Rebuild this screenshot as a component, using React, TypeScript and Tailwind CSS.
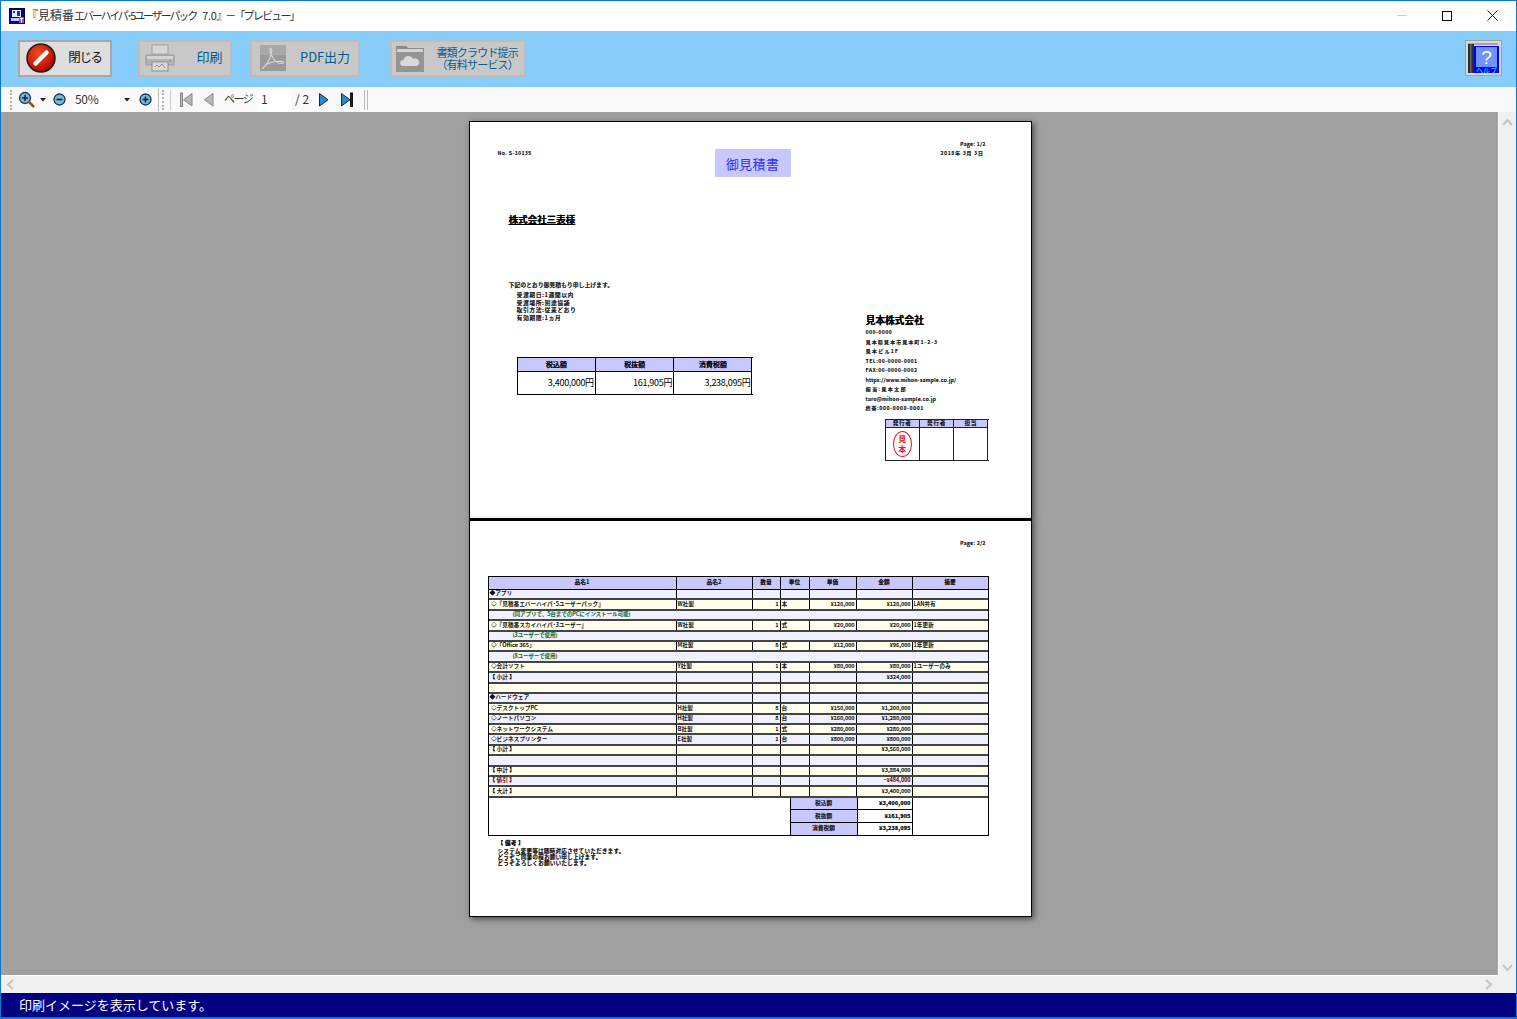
import React from "react";

const font = { fontFamily: '"Noto Sans CJK JP", "Noto Sans", sans-serif' };

function AppIcon() {
  return (
    <svg width="16" height="16" viewBox="0 0 16 16" className="shrink-0">
      <rect x="0.5" y="0.5" width="15" height="15" fill="#0000a8" stroke="#000050" />
      <rect x="2.500" y="1.500" width="10" height="8" fill="#e8e8ff" stroke="#000" />
      <rect x="4" y="3" width="2" height="2" fill="#2030c0" />
      <rect x="8" y="3" width="3" height="5" fill="#2030c0" />
      <rect x="2" y="10" width="9" height="3" fill="#c8c8e8" />
      <rect x="10" y="9" width="5" height="6" fill="#b040c0" />
      <path d="M11 10.500h3M12.500 10.500v4" stroke="#fff" />
    </svg>
  );
}

function CloseIcon() {
  return (
    <svg width="30" height="30" viewBox="0 0 30 30">
      <defs>
        <radialGradient id="rd" cx="40%" cy="35%" r="70%">
          <stop offset="0" stopColor="#f04a20" />
          <stop offset="0.7" stopColor="#cc1808" />
          <stop offset="1" stopColor="#7a0800" />
        </radialGradient>
      </defs>
      <circle cx="15" cy="15" r="14" fill="url(#rd)" stroke="#2a1a10" strokeWidth="1.5" />
      <path d="M9.5 20.5 20.5 9.5" stroke="#fff" strokeWidth="4.5" strokeLinecap="round" />
    </svg>
  );
}

function PrinterIcon() {
  return (
    <svg width="30" height="28" viewBox="0 0 30 28">
      <rect x="7" y="1" width="16" height="9" fill="#d8d8d8" stroke="#a0a0a0" />
      <path d="M1 11h28v10H1z" fill="#b4b4b4" stroke="#989898" />
      <rect x="2" y="12" width="26" height="3" fill="#d4d4d4" />
      <circle cx="25" cy="17" r="1" fill="#8a8a8a" />
      <rect x="7" y="18" width="16" height="9" fill="#d8d8d8" stroke="#8f8f8f" />
      <path d="M10 23l2-2 2 2 3-3 3 4" fill="none" stroke="#8f8f8f" />
    </svg>
  );
}

function PdfIcon() {
  return (
    <svg width="26" height="26" viewBox="0 0 26 26">
      <rect width="26" height="26" fill="#9a9a9a" />
      <rect width="26" height="10" fill="#a8a8a8" />
      <path d="M2 24c5-4 8-10 9.500-16 .4-2 .3-5-.7-5-1 0-1 3-.3 5 2 5 5 9 8 10 2 .5 5 .5 5-.5s-4-1.500-8-1c-4 .5-9 2.500-11 5"
        fill="none" stroke="#d4d4d4" strokeWidth="1.200" />
    </svg>
  );
}

function FolderIcon() {
  return (
    <svg width="28" height="28" viewBox="0 0 28 28">
      <path d="M0 2h10l2 2h16v24H0z" fill="#8a8a8a" />
      <rect x="1" y="5" width="26" height="3" fill="#d4d4d4" />
      <rect x="0" y="8" width="28" height="20" fill="#949494" />
      <path d="M7 22a3 3 0 0 1 .5-6 5 5 0 0 1 9.500-1 3.500 3.500 0 0 1 4 7z" fill="#d8d8d8" />
    </svg>
  );
}

function HelpIcon() {
  return (
    <svg width="37" height="36" viewBox="0 0 37 36">
      <rect x="0.500" y="0.500" width="36" height="35" fill="#d8d8d8" stroke="#a0a0a0" />
      <rect x="3" y="3" width="30" height="2" fill="#a8a8a8" />
      <rect x="3" y="4" width="6" height="29" fill="#303030" />
      <rect x="5" y="4" width="1.500" height="29" fill="#666" />
      <rect x="9" y="6" width="25" height="27" fill="#0000f0" />
      <rect x="11" y="7" width="21" height="20" fill="#7094ff" />
      <text x="21.500" y="23.500" textAnchor="middle" fontSize="19" fill="#fff" fontFamily="Liberation Sans">?</text>
      <text x="21.500" y="32.500" textAnchor="middle" fontSize="7" fill="#20f0ff" fontFamily="Noto Sans CJK JP">ヘルプ</text>
    </svg>
  );
}

function ToolButton({ icon, children, w, iconW, disabled }: { icon: React.ReactNode; children: React.ReactNode; w: string; iconW: string; disabled?: boolean }) {
  return (
    <div className={`${w} h-[37px] flex items-center border-2 whitespace-nowrap ${disabled ? "bg-[#c8c8c8] border-[#bcbcbc] text-[#005c8e]" : "bg-[#dedede] border-[#a8a8a8] text-[#111]"}`}>
      <div className={`${iconW} flex justify-center items-center shrink-0`}>{icon}</div>
      <div className="flex-1 text-center">{children}</div>
    </div>
  );
}

function Grip() {
  return <div className="h-[20px] w-[3px] border-l-2 border-dotted border-[#b4b4b4]" />;
}

function NavIcon({ kind }: { kind: "first" | "prev" | "next" | "last" }) {
  const dis = kind === "first" || kind === "prev";
  const fill = dis ? "#b8b8b8" : "#2f86c8";
  const stroke = dis ? "#888" : "#0c2c50";
  const path = kind === "first" || kind === "prev" ? "M12 1.500V14L3.500 7.800z" : "M3.500 1.500V14L12 7.800z";
  return (
    <svg width="15" height="16" viewBox="0 0 15 16">
      <path d={path} fill={fill} stroke={stroke} />
      {kind === "first" && <rect x="0.500" y="1" width="2" height="13.500" fill="#b8b8b8" stroke="#888" />}
      {kind === "last" && <rect x="12.500" y="1" width="2" height="13.500" fill="#222" stroke="#111" />}
    </svg>
  );
}

function RoundIcon({ plus }: { plus?: boolean }) {
  return (
    <svg width="13" height="13" viewBox="0 0 13 13">
      <circle cx="6.500" cy="6.500" r="5.500" fill="#7db6dc" stroke="#17394f" strokeWidth="1.300" />
      <path d={plus ? "M3.500 6.500h6M6.500 3.500v6" : "M3.500 6.500h6"} stroke="#0c2434" strokeWidth="1.600" />
    </svg>
  );
}

function Caret() {
  return (
    <svg width="6" height="4" viewBox="0 0 6 4">
      <path d="M0 0h6L3 3.500z" fill="#222" />
    </svg>
  );
}

const W = [188, 76, 28, 29, 47, 56, 75];

type Row = { c?: string[]; note?: string; color?: string };
const rows: Row[] = [
  { c: ["◆アプリ"] },
  { c: [" ◇『見積番エバーハイパ･5ユーザーパック』", "W社製", "1", "本", "¥120,000", "¥120,000", "LAN共有"] },
  { note: "(同アプリで、5台までのPCにインストール可能)" },
  { c: [" ◇『見積番スカイハイパ･3ユーザー』", "W社製", "1", "式", "¥20,000", "¥20,000", "1年更新"] },
  { note: "(3ユーザーで使用)" },
  { c: [" ◇「Office 365」", "M社製", "8", "式", "¥12,000", "¥96,000", "1年更新"] },
  { note: "(8ユーザーで使用)" },
  { c: [" ◇会計ソフト", "Y社製", "1", "本", "¥80,000", "¥80,000", "1ユーザーのみ"] },
  { c: ["【 小計 】", "", "", "", "", "¥324,000"] },
  { c: [""] },
  { c: ["◆ハードウェア"] },
  { c: [" ◇デスクトップPC", "H社製", "8", "台", "¥150,000", "¥1,200,000"] },
  { c: [" ◇ノートパソコン", "H社製", "8", "台", "¥160,000", "¥1,280,000"] },
  { c: [" ◇ネットワークシステム", "B社製", "1", "式", "¥280,000", "¥280,000"] },
  { c: [" ◇ビジネスプリンター", "E社製", "1", "台", "¥800,000", "¥800,000"] },
  { c: ["【 小計 】", "", "", "", "", "¥3,560,000"] },
  { c: [""] },
  { c: ["【 中計 】", "", "", "", "", "¥3,884,000"] },
  { c: ["【 値引 】", "", "", "", "", "−¥484,000"], color: "#7a0000" },
  { c: ["【 大計 】", "", "", "", "", "¥3,400,000"] },
];

const smear = "[text-shadow:0.3px_0_0_currentColor]";

function DataRow({ r, i }: { r: Row; i: number }) {
  const bg = i % 2 === 0 ? "bg-[#f0f0ff]" : "bg-[#ffffec]";
  if (r.note) {
    return (
      <div className={`h-[10.4px] ${bg} border-b-2 border-[#444] flex items-center pl-[24px] text-[5.500px] text-[#0a6a20] leading-none whitespace-nowrap`}>
        {r.note}
      </div>
    );
  }
  const cells = r.c || [];
  return (
    <div className={`h-[10.4px] ${bg} border-b-2 border-[#444] flex text-[5.500px] tracking-[0.15px] leading-none whitespace-nowrap`} style={{ color: r.color || "#111" }}>
      {W.map((w, k) => (
        <div
          key={k}
          style={{ width: w }}
          className={`h-full flex items-center overflow-hidden px-[1px] ${k < 6 ? "border-r border-black" : ""} ${k === 2 || k === 4 || k === 5 ? "justify-end" : ""}`}
        >
          <span className="whitespace-pre">{cells[k] || ""}</span>
        </div>
      ))}
    </div>
  );
}

const companyLines = [
  { t: "000-0000", k: "tracking-[0.6px]" },
  { t: "見本県見本市見本町1-2-3", k: "tracking-[1.1px]" },
  { t: "見本ビル1F", k: "tracking-[1.300px]" },
  { t: "TEL:00-0000-0001", k: "tracking-[0.6px]" },
  { t: "FAX:00-0000-0002", k: "tracking-[0.6px]" },
  { t: "https://www.mihon-sample.co.jp/", k: "tracking-[0.3px]" },
  { t: "担当:見本太郎", k: "tracking-[1.400px]" },
  { t: "taro@mihon-sample.co.jp", k: "tracking-[0.35px]" },
  { t: "携帯:000-0000-0001", k: "tracking-[0.75px]" },
];

const Sum = [
  ["税込額", "3,400,000円"],
  ["税抜額", "161,905円"],
  ["消費税額", "3,238,095円"],
];

export default function App() {
  return (
    <div style={font} className="w-[1517px] h-[1019px] flex flex-col border-x border-b-2 border-[#0f78c8] border-t bg-white overflow-hidden">
      {/* title bar */}
      <div className="h-[30px] flex items-center bg-white shrink-0 pb-[1px]">
        <div className="ml-[8px]"><AppIcon /></div>
        <div className="ml-[1px] pb-[1px] text-[12px] text-[#333] whitespace-nowrap flex items-baseline">
          <span>『見積番</span>
          <span className="text-[11px] tracking-[-2.100px]">エバーハイパ･5ユーザーパック</span>
          <span className="text-[11px] ml-[6px] tracking-[-0.3px]">7.0』</span>
          <span className="text-[11px] tracking-[-1.800px] ml-[-2px]">－「プレビュー」</span>
        </div>
        <div className="ml-auto flex items-center">
          <div className="w-[10px] h-[1px] bg-[#ccc] mr-[35px]" />
          <div className="w-[10px] h-[10px] border border-black mr-[35px]" />
          <svg width="11" height="11" viewBox="0 0 11 11" className="mr-[18px]"><path d="M0.500 0.500l10 10M10.500 0.500l-10 10" stroke="#111" strokeWidth="1" /></svg>
        </div>
      </div>

      {/* main toolbar */}
      <div className="h-[56px] bg-[#87cdfb] shrink-0 flex items-center pl-[17px] pr-[14px] pb-[2px]">
        <ToolButton w="w-[94px]" iconW="w-[42px]" icon={<CloseIcon />}>
          <div className="pr-[2px] pb-[2px] text-[12.500px] tracking-[-1.400px]">閉じる</div>
        </ToolButton>
        <div className="ml-[26px]">
          <ToolButton disabled w="w-[94px]" iconW="w-[40px]" icon={<PrinterIcon />}>
            <div className="pl-[9px] pb-[2px] text-[13px] tracking-[0px]">印刷</div>
          </ToolButton>
        </div>
        <div className="ml-[18px]">
          <ToolButton disabled w="w-[110px]" iconW="w-[42px]" icon={<PdfIcon />}>
            <div className="pr-[2px] pb-[2px] text-[13px] tracking-[-0.1px]">PDF出力</div>
          </ToolButton>
        </div>
        <div className="ml-[30px]">
          <ToolButton disabled w="w-[136px]" iconW="w-[36px]" icon={<FolderIcon />}>
            <div className="pr-[6px] text-right text-[11px] leading-[12px] tracking-[-0.8px]">
              <div>書類クラウド提示</div>
              <div>（有料サービス）</div>
            </div>
          </ToolButton>
        </div>
        <div className="ml-auto"><HelpIcon /></div>
      </div>

      {/* nav toolbar */}
      <div className="h-[25px] bg-[#f9f9f9] shrink-0 flex items-center text-[12px] text-[#333]">
        <div className="ml-[9px]"><Grip /></div>
        <svg width="17" height="17" viewBox="0 0 17 17" className="ml-[5px]">
          <circle cx="7" cy="7" r="5.500" fill="#7db6dc" stroke="#17394f" strokeWidth="1.300" />
          <path d="M4 7h6M7 4v6" stroke="#0c2434" strokeWidth="1.500" />
          <path d="M11 11l5 5" stroke="#8a5a20" strokeWidth="2.500" />
        </svg>
        <div className="ml-[5px]"><Caret /></div>
        <div className="ml-[7px]"><RoundIcon /></div>
        <div className="ml-[6px] w-[48px] h-[24px] bg-white flex items-center pl-[3px] pb-[2px] tracking-[-0.3px]">50%</div>
        <div className="ml-[4px]"><Caret /></div>
        <div className="ml-[9px]"><RoundIcon plus /></div>
        <div className="ml-[6px] w-[1px] h-[22px] bg-[#bbb]" />
        <div className="ml-[3px]"><Grip /></div>
        <div className="ml-[5px] w-[1px] h-[20px] bg-[#ccc]" />
        <div className="ml-[9px]"><NavIcon kind="first" /></div>
        <div className="ml-[6px]"><NavIcon kind="prev" /></div>
        <div className="ml-[8px] w-[28px] pb-[2px] text-[11px] tracking-[-1.500px] whitespace-nowrap">ページ</div>
        <div className="ml-[5px] w-[34px] h-[24px] bg-white flex items-center pl-[4px] pb-[2px]">1</div>
        <div className="ml-[4px] w-[15px] pb-[2px] whitespace-nowrap">/ 2</div>
        <div className="ml-[6px]"><NavIcon kind="next" /></div>
        <div className="ml-[7px]"><NavIcon kind="last" /></div>
        <div className="ml-[11px] w-[1px] h-[20px] bg-[#bbb]" />
        <div className="ml-[2px] w-[1px] h-[20px] bg-[#bbb]" />
      </div>

      {/* preview + vertical scrollbar */}
      <div className="flex h-[864px] shrink-0">
        <div className="w-[1498px] bg-[#a0a0a0] border-r border-b border-white flex flex-col items-center pt-[9px] pl-[1px] overflow-hidden">
          {/* page 1 */}
          <div className={`w-[563px] h-[398px] pl-[1px] shrink-0 bg-white border border-black shadow-[2px_2px_6px_rgba(0,0,0,0.55)] text-[#222] ${smear}`}>
            <div className="flex pl-[27px] pr-[45px] pt-[17px] text-[5px] leading-[9px] font-medium">
              <div className="w-[217px] mt-[9px] tracking-[0.5px]">No. S-10135</div>
              <div className="mt-[10px] w-[76px] h-[28px] bg-[#c8c8ff] text-[#3030f0] text-[13px] tracking-[0.4px] flex items-center justify-center font-normal [text-shadow:none]">御見積書</div>
              <div className="ml-auto text-right">
                <div className="tracking-[0.4px]">Page: 1/2</div>
                <div className="mr-[2px] tracking-[0.8px]">2018年 3月 3日</div>
              </div>
            </div>
            <div className="ml-[38px] mt-[35px] text-[9.500px] leading-[14px] font-bold text-black underline">株式会社三表様</div>
            <div className="flex mt-[55px]">
              <div className="w-[395px] shrink-0">
                <div className="ml-[38px] text-[5.700px] tracking-[0.15px] leading-[8px] font-medium">下記のとおり御見積もり申し上げます。</div>
                <div className="ml-[46px] mt-[2px] text-[5.700px] tracking-[0.7px] leading-[7.500px] font-medium">
                  <div>受渡期日:1週間以内</div>
                  <div>受渡場所:別途協議</div>
                  <div>取引方法:従来どおり</div>
                  <div>有効期限:1ヵ月</div>
                </div>
                <div className="ml-[46px] mt-[36px] w-[236px] flex border border-black border-r-0">
                  {Sum.map(([h, v]) => (
                    <div key={h} className="flex-1 border-r border-black">
                      <div className="h-[14px] bg-[#c8c8ff] border-b border-black flex items-center justify-center text-[7px] font-medium text-black">{h}</div>
                      <div className="h-[22px] flex items-center justify-end text-[9px] tracking-[-0.3px] pr-[1px] text-black [text-shadow:none]">{v}</div>
                    </div>
                  ))}
                </div>
              </div>
              <div className="mt-[32px]">
                <div className="text-[9.700px] leading-[14px] font-bold text-black">見本株式会社</div>
                <div className="text-[5px] leading-[9.500px] font-medium whitespace-nowrap">
                  {companyLines.map((l) => <div key={l.t} className={l.k}>{l.t}</div>)}
                </div>
                <div className="ml-[19px] mt-[6px] w-[104px] flex border border-[#222] border-r-0">
                  {["発行者", "発行者", "担当"].map((h, i) => (
                    <div key={i} className="flex-1 border-r border-[#222]">
                      <div className="h-[8px] bg-[#c8c8ff] border-b border-[#222] flex items-center justify-center text-[5.500px] tracking-[0.8px] font-medium">{h}</div>
                      <div className="h-[32px] flex items-center justify-center">
                        {i === 0 && (
                          <div className="w-[19px] h-[26px] rounded-[50%] border border-[#f01020] flex flex-col items-center justify-center text-[#f01020] text-[8px] leading-[10px] font-bold [text-shadow:none]">
                            <span>見</span><span>本</span>
                          </div>
                        )}
                      </div>
                    </div>
                  ))}
                </div>
              </div>
            </div>
          </div>

          {/* page 2 */}
          <div className={`w-[563px] h-[398px] pl-[1px] shrink-0 bg-white border border-black border-t-2 shadow-[2px_2px_6px_rgba(0,0,0,0.55)] text-[#222] ${smear}`}>
            <div className="pr-[45px] pt-[17px] text-right text-[5px] tracking-[0.4px] leading-[9px] font-medium">Page: 2/2</div>
            <div className="ml-[17px] mt-[29px] w-[501px] border border-black">
              <div className="h-[13px] flex bg-[#c8c8ff] border-b border-black text-[5.500px] tracking-[0.3px] leading-none font-medium text-[#111]">
                {["品名1", "品名2", "数量", "単位", "単価", "金額", "摘要"].map((h, k) => (
                  <div key={h} style={{ width: W[k] }} className={`h-full flex items-center justify-center ${k < 6 ? "border-r border-black" : ""}`}>{h}</div>
                ))}
              </div>
              {rows.map((r, i) => <DataRow key={i} r={r} i={i} />)}
              <div className="h-[37px] flex justify-end">
                <div className="w-[123px] flex flex-col border-l border-r border-black text-[5.500px] tracking-[0.2px] leading-none">
                  {["税込額", "税抜額", "消費税額"].map((l, i) => (
                    <div key={l} className={`flex-1 flex ${i < 2 ? "border-b border-black" : ""}`}>
                      <div className="w-[67px] bg-[#c8c8ff] border-r border-black flex items-center justify-center font-medium">{l}</div>
                      <div className="flex-1 flex items-center justify-end pr-[1px] font-bold">{["¥3,400,000", "¥161,905", "¥3,238,095"][i]}</div>
                    </div>
                  ))}
                </div>
                <div className="w-[75px]" />
              </div>
            </div>
            <div className="ml-[27px] mt-[3px] text-[5.500px] tracking-[0.3px] leading-[6px] font-medium text-[#111] whitespace-nowrap">
              <div className="leading-[9px] font-bold">【 備考 】</div>
              <div>システム変更等は随時対応させていただきます。</div>
              <div>どうぞご同業の程お願い申し上げます。</div>
              <div>どうぞよろしくお願いいたします。</div>
            </div>
          </div>
        </div>
        <div className="flex-1 bg-[#f0f0f0] flex flex-col items-center justify-between pt-[6px] pb-[4px]">
          <svg width="11" height="8" viewBox="0 0 11 8"><path d="M1 7l4.500-5L10 7" fill="none" stroke="#c4c4c4" strokeWidth="2" /></svg>
          <svg width="11" height="8" viewBox="0 0 11 8"><path d="M1 1l4.500 5L10 1" fill="none" stroke="#c4c4c4" strokeWidth="2" /></svg>
        </div>
      </div>

      {/* horizontal scrollbar */}
      <div className="h-[17px] shrink-0 bg-[#f0f0f0] flex items-center pl-[5px] pr-[23px] justify-between">
        <svg width="8" height="11" viewBox="0 0 8 11"><path d="M7 1L2 5.500 7 10" fill="none" stroke="#c4c4c4" strokeWidth="2" /></svg>
        <svg width="8" height="11" viewBox="0 0 8 11"><path d="M1 1l5 4.500L1 10" fill="none" stroke="#c4c4c4" strokeWidth="2" /></svg>
      </div>

      {/* status bar */}
      <div className="flex-1 bg-[#000080] text-white text-[13px] flex items-center pl-[18px] pb-[1px]">印刷イメージを表示しています。</div>
    </div>
  );
}
